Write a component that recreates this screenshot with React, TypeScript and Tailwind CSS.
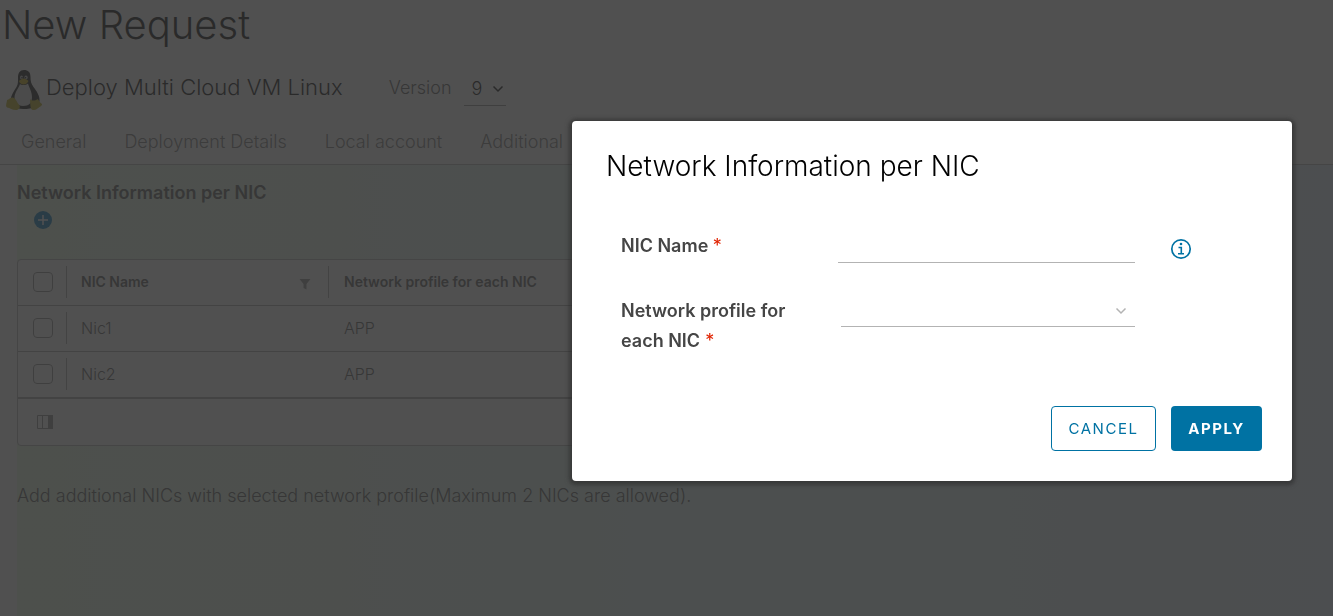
import React from "react";

const tabs = ["General", "Deployment Details", "Local account", "Additional"];
const rows = [
  { name: "Nic1", profile: "APP" },
  { name: "Nic2", profile: "APP" },
];

function Penguin() {
  return (
    <svg viewBox="0 0 44 44" className="size-11 shrink-0" aria-hidden="true">
      <rect width="44" height="44" fill="#ffffff" />
      <path
        d="M22 2c-4 0-6 3-6 7 0 4 .3 7-1.500 10-2.500 4-5.500 8-6 13-.3 5 4 9 13 9s15-2 16-8c.6-5-3-10-6-14-2.500-3.500-3-6-3-10 0-5-2.500-7-6.500-7z"
        fill="#101010"
      />
      <path
        d="M18 16c2 2 6 1 8-.5 1 4 4 8 4 13.500 0 6-3 9-9 9-6 0-8.500-4-8.500-8.500 0-5 4-9 5.500-13.500z"
        fill="#dcdcdc"
      />
      <ellipse cx="19.500" cy="9.500" rx="1.500" ry="2" fill="#bbbbbb" />
      <ellipse cx="24" cy="9.500" rx="1.700" ry="2" fill="#bbbbbb" />
      <circle cx="20" cy="9.800" r="0.800" fill="#000" />
      <circle cx="23.500" cy="9.800" r="0.800" fill="#000" />
      <path d="M17 13c1.500-1.500 3-2.500 4.500-2.500S25 11.500 26.500 13c-1 2.500-3 3.500-5 3.500S17.500 15 17 13z" fill="#c9a800" />
      <path d="M5 32c2-.5 4-3 6-2.500 3 1 4 5 6.500 8 1 2-.5 4.500-3.500 4.500-4 0-6-2-9-2.500-2-1.500 0-5 0-7.500z" fill="#b8a810" />
      <path d="M28 31c1.500 2 5 2 7.500 0 1.500 1 2 3.500 4.500 5 .5 2-3 3-5 5-2 1.500-5 1.500-6-.5-.8-3-.8-6-1-9.500z" fill="#b8a810" />
    </svg>
  );
}

function Chevron({ className }: { className: string }) {
  return (
    <svg viewBox="0 0 12 8" className={className} fill="none" stroke="currentColor" aria-hidden="true">
      <path d="M1.500 1.500 6 6l4.500-4.500" />
    </svg>
  );
}

function Check({ label }: { label: string }) {
  return (
    <input
      type="checkbox"
      aria-label={label}
      className="block size-5 appearance-none rounded border border-[#8c8c8c]"
    />
  );
}

function RequestPage() {
  return (
    <div className="flex min-h-screen flex-col">
      <h1 className="px-0.5 text-[40px] leading-[49px] font-light text-black">New Request</h1>
      <div className="mt-[19px] flex h-11 items-center px-0.5">
        <Penguin />
        <h2 className="pb-1.5 text-[22px] leading-7 font-light text-black">Deploy Multi Cloud VM Linux</h2>
        <label htmlFor="version" className="ml-[46px] pb-1 text-lg font-light text-[#565656]">
          Version
        </label>
        <div className="relative ml-3 flex h-8 w-[42px] items-center border-b border-[#8c8c8c] pb-0.5">
          <select
            id="version"
            className="h-full w-full appearance-none bg-transparent pl-2 text-lg font-light text-black"
          >
            <option>9</option>
          </select>
          <Chevron className="pointer-events-none absolute right-0.5 h-2 w-3 stroke-[1.500] text-black" />
        </div>
      </div>
      <nav className="flex h-[53px] items-center gap-[38px] border-b border-[#b3b3b3] px-[21px] pt-2 text-lg font-light text-[#777777]">
        {tabs.map((t) => (
          <a key={t} href="#tab">
            {t}
          </a>
        ))}
      </nav>
      <main className="ml-[17px] grow bg-linear-to-r from-[#e8fae4] via-[#e4f8f4] to-[#e4eefa]">
        <h3 className="pt-4 text-lg leading-6 font-semibold text-[#565656]">Network Information per NIC</h3>
        <button type="button" aria-label="Add NIC" className="mt-[5px] ml-4 block size-5">
          <svg viewBox="0 0 20 20" className="size-5">
            <circle cx="10" cy="10" r="9" fill="#0079b8" />
            <path d="M10 5v10M5 10h10" stroke="#fff" strokeWidth="1.500" />
          </svg>
        </button>
        <div className="mt-[29px] w-2/3 overflow-hidden rounded border border-[#b3b3b3] bg-white">
          <table className="w-full table-fixed border-collapse text-left">
            <colgroup>
              <col className="w-12" />
              <col className="w-[263px]" />
              <col />
            </colgroup>
            <thead>
              <tr className="h-[45px] border-b border-[#a6a6a6] text-sm text-[#565656]">
                <th className="pl-[15px]">
                  <Check label="Select all rows" />
                </th>
                <th className="p-0">
                  <div className="flex h-8 items-center justify-between border-x border-[#a6a6a6] pr-[17px] pl-3.5 font-semibold">
                    NIC Name
                    <svg viewBox="0 0 12 12" className="mt-1 size-3" fill="#8c8c8c" aria-hidden="true">
                      <path d="M.5 1h11L7.500 6v5.500l-3-1.500V6z" />
                    </svg>
                  </div>
                </th>
                <th className="pl-[15px] font-semibold">Network profile for each NIC</th>
              </tr>
            </thead>
            <tbody>
              {rows.map((r) => (
                <tr key={r.name} className="h-[46px] border-b border-[#a6a6a6] text-base text-[#565656]">
                  <td className="pl-[15px]">
                    <Check label={`Select ${r.name}`} />
                  </td>
                  <td className="p-0">
                    <div className="flex h-8 items-center border-l border-[#a6a6a6] pl-3.5 font-light">{r.name}</div>
                  </td>
                  <td className="pl-[15px] font-light">{r.profile}</td>
                </tr>
              ))}
            </tbody>
          </table>
          <div className="flex h-[47px] items-center border-t border-[#a6a6a6] pl-[18px]">
            <button type="button" aria-label="Choose columns">
              <svg viewBox="0 0 18 16" className="h-4 w-[18px]" fill="none" stroke="#8c8c8c">
                <path d="M1.500 1.500h15v13h-15zM6.500 1.500v13" />
                <path d="M12 1h5v14h-5z" fill="#8c8c8c" stroke="none" />
              </svg>
            </button>
          </div>
        </div>
        <p className="mt-9 text-lg font-light text-[#565656]">
          Add additional NICs with selected network profile(Maximum 2 NICs are allowed).
        </p>
      </main>
    </div>
  );
}

function NicDialog() {
  return (
    <div className="fixed inset-0 flex items-start justify-end bg-[#313131]/85 pt-[121px] pr-[41px]">
      <section
        role="dialog"
        aria-modal="true"
        aria-labelledby="dialog-title"
        className="w-full max-w-[720px] rounded bg-white px-[30px] pt-[25px] pb-[30px] shadow-[0_1px_4px_3px_rgba(40,40,40,0.6)]"
      >
        <h2 id="dialog-title" className="pl-1 text-[28px] leading-10 font-light text-black">
          Network Information per NIC
        </h2>
        <form className="mt-11 pl-[19px]" onSubmit={(e) => e.preventDefault()}>
          <div className="flex h-[65px] items-start">
            <label htmlFor="nic-name" className="w-[217px] pt-px text-lg leading-[30px] font-semibold text-[#454545]">
              NIC Name <span className="font-normal text-[#e02200]">*</span>
            </label>
            <input id="nic-name" className="h-[33px] w-[297px] border-b border-[#b3b3b3] bg-transparent px-2 outline-none" />
            <button type="button" aria-label="NIC name help" className="mt-2 ml-[35px]">
              <svg viewBox="0 0 22 22" className="size-[22px]" fill="none" stroke="#0072a3">
                <circle cx="11" cy="11" r="9.200" strokeWidth="1.700" />
                <path d="M8.500 9.500h2.800v6M8 15.700h6" strokeWidth="1.600" />
                <circle cx="11" cy="6" r="1.300" fill="#0072a3" stroke="none" />
              </svg>
            </button>
          </div>
          <div className="flex items-start">
            <label htmlFor="nic-profile" className="w-[220px] pt-px text-lg leading-[30px] font-semibold text-[#454545]">
              <span className="block">Network profile for</span>
              <span className="flex gap-[5px]">
                <span>each NIC</span>
                <span className="font-normal text-[#e02200]">*</span>
              </span>
            </label>
            <div className="relative flex w-[294px] items-center border-b border-[#b3b3b3]">
              <select id="nic-profile" className="h-[31px] w-full appearance-none bg-transparent px-2 outline-none">
                <option></option>
              </select>
              <Chevron className="pointer-events-none absolute right-2 h-2 w-3 stroke-[1.500] text-[#b3b3b3]" />
            </div>
          </div>
        </form>
        <div className="mt-[50px] flex justify-end gap-[15px] text-[15px] tracking-widest">
          <button type="button" className="h-[45px] min-w-[105px] rounded border border-[#0072a3] px-4 pt-0.5 text-[#0072a3]">
            CANCEL
          </button>
          <button type="button" className="h-[45px] min-w-[91px] rounded bg-[#0072a3] px-4 pt-0.5 font-bold text-white">
            APPLY
          </button>
        </div>
      </section>
    </div>
  );
}

export default function App() {
  return (
    <div className="bg-white font-['Inter',sans-serif]">
      <RequestPage />
      <NicDialog />
    </div>
  );
}
